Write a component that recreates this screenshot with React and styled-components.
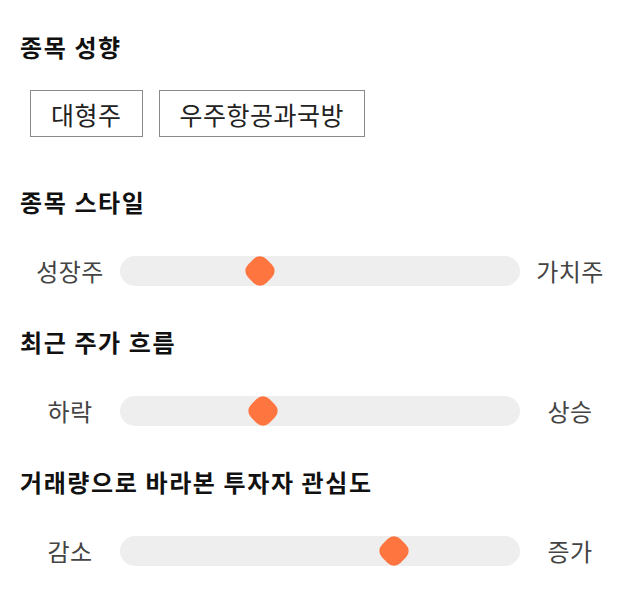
import styled, { createGlobalStyle } from "styled-components";

const GlobalStyle = createGlobalStyle`
    body {
        margin: 0;
        background: #fff;
        font-family: "Noto Sans CJK KR", "Noto Sans", sans-serif;
        color: #111;
    }
`;

const Page = styled.div`
    padding: 32px 20px 20px;
`;

const Section = styled.section`
    margin-top: ${(p) => p.gap || 0}px;
`;

const Title = styled.h2`
    margin: 0;
    font-size: 24px;
    font-weight: 700;
    letter-spacing: 1.6px;
    line-height: 30px;
    color: #111;
`;

const ChipRow = styled.div`
    display: flex;
    gap: 16px;
    padding-left: 10px;
    margin-top: 28px;
`;

const Chip = styled.div`
    box-sizing: border-box;
    height: 47px;
    padding: 0 20px;
    display: flex;
    align-items: center;
    border: 1px solid #8a8a8a;
    font-size: 25px;
    letter-spacing: 0.5px;
    color: #222;
`;

const SliderRow = styled.div`
    display: grid;
    grid-template-columns: 100px 1fr 100px;
    align-items: center;
    margin-top: 39px;
`;

const Label = styled.span`
    text-align: center;
    font-size: 24px;
    letter-spacing: 0.5px;
    color: #444;
    line-height: 30px;
`;

const Track = styled.div`
    position: relative;
    height: 30px;
    border-radius: 15px;
    background: #eeeeee;
`;

const Thumb = styled.div`
    position: absolute;
    top: 2px;
    width: 26px;
    height: 26px;
    margin-left: -13px;
    border-radius: 9px;
    background: #ff753f;
    transform: rotate(45deg);
`;

const sliders = [
    { title: "종목 스타일", left: "성장주", right: "가치주", pos: 0.35 },
    { title: "최근 주가 흐름", left: "하락", right: "상승", pos: 0.357 },
    { title: "거래량으로 바라본 투자자 관심도", left: "감소", right: "증가", pos: 0.685 },
];

const App = () => {
    return (
        <>
            <GlobalStyle />
            <Page>
                <Section>
                    <Title>종목 성향</Title>
                    <ChipRow>
                        <Chip>대형주</Chip>
                        <Chip>우주항공과국방</Chip>
                    </ChipRow>
                </Section>

                {sliders.map((s, i) => (
                    <Section key={s.title} gap={i === 0 ? 50 : 41}>
                        <Title>{s.title}</Title>
                        <SliderRow>
                            <Label>{s.left}</Label>
                            <Track>
                                <Thumb style={{ left: `${s.pos * 100}%` }} />
                            </Track>
                            <Label>{s.right}</Label>
                        </SliderRow>
                    </Section>
                ))}
            </Page>
        </>
    );
};

export default App;
